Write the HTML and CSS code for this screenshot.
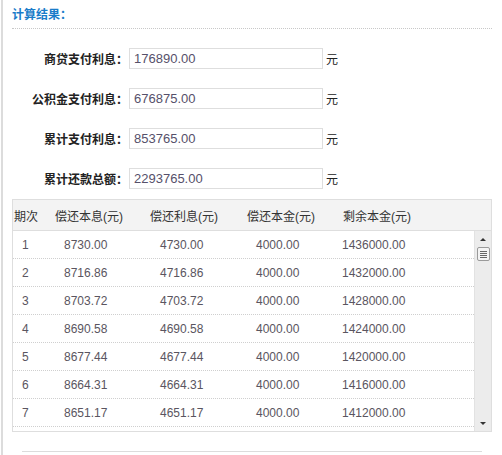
FILE: index.html
```html
<!DOCTYPE html>
<html lang="zh-CN">
<head>
<meta charset="utf-8">
<title>计算结果</title>
<link rel="stylesheet" href="styles.css">
</head>
<body>
<div class="panel">
  <div class="title">计算结果：</div>
  <div class="form">
    <div class="row"><span class="label">商贷支付利息：</span><span class="input">176890.00</span><span class="unit">元</span></div>
    <div class="row"><span class="label">公积金支付利息：</span><span class="input">676875.00</span><span class="unit">元</span></div>
    <div class="row"><span class="label">累计支付利息：</span><span class="input">853765.00</span><span class="unit">元</span></div>
    <div class="row"><span class="label">累计还款总额：</span><span class="input">2293765.00</span><span class="unit">元</span></div>
  </div>
  <div class="table">
    <div class="thead">
      <span>期次</span><span>偿还本息(元)</span><span>偿还利息(元)</span><span>偿还本金(元)</span><span>剩余本金(元)</span>
    </div>
    <div class="tbody">
      <div class="rows">
        <div class="tr"><span>1</span><span>8730.00</span><span>4730.00</span><span>4000.00</span><span>1436000.00</span></div>
        <div class="tr"><span>2</span><span>8716.86</span><span>4716.86</span><span>4000.00</span><span>1432000.00</span></div>
        <div class="tr"><span>3</span><span>8703.72</span><span>4703.72</span><span>4000.00</span><span>1428000.00</span></div>
        <div class="tr"><span>4</span><span>8690.58</span><span>4690.58</span><span>4000.00</span><span>1424000.00</span></div>
        <div class="tr"><span>5</span><span>8677.44</span><span>4677.44</span><span>4000.00</span><span>1420000.00</span></div>
        <div class="tr"><span>6</span><span>8664.31</span><span>4664.31</span><span>4000.00</span><span>1416000.00</span></div>
        <div class="tr"><span>7</span><span>8651.17</span><span>4651.17</span><span>4000.00</span><span>1412000.00</span></div>
      </div>
      <div class="scrollbar">
        <svg class="arrow" width="16" height="16" viewBox="0 0 16 16"><path d="M5 10 L11 10 L8 7 Z" fill="#333"/></svg>
        <div class="thumb"><i></i><i></i><i></i><i></i></div>
        <div class="track"></div>
        <svg class="arrow" width="16" height="16" viewBox="0 0 16 16"><path d="M5 7 L11 7 L8 10 Z" fill="#333"/></svg>
      </div>
    </div>
  </div>
  <div class="bottom-line"></div>
</div>
</body>
</html>
```
FILE: styles.css
```css
html, body {
  margin: 0;
  padding: 0;
  background: #fff;
}
body {
  font-family: "Liberation Sans", Arial, "Noto Sans CJK SC", sans-serif;
  font-size: 12px;
  color: #333;
  width: 502px;
  height: 455px;
  overflow: hidden;
}
.panel {
  margin-left: 1px;
  border-left: 2px solid #dcdcdc;
  padding: 0 10px 0 9px;
  height: 455px;
  box-sizing: border-box;
}
.title {
  height: 29px;
  line-height: 16px;
  padding-top: 7px;
  box-sizing: border-box;
  border-bottom: 1px dotted #c8c8c8;
  color: #1a7cc9;
  font-weight: bold;
  font-size: 12px;
}
.form {
  padding-top: 19px;
  display: flex;
  flex-direction: column;
  gap: 19px;
}
.row {
  display: flex;
  align-items: center;
  height: 21px;
}
.label {
  width: 116px;
  text-align: right;
  font-weight: bold;
  color: #222;
  margin-right: 1px;
  white-space: nowrap;
}
.input {
  width: 194px;
  height: 21px;
  box-sizing: border-box;
  border: 1px solid #dedede;
  padding-left: 4px;
  font-size: 13px;
  line-height: 19px;
  color: #56506a;
}
.unit {
  margin-left: 3px;
  color: #222;
}
.table {
  margin-top: 10px;
  border: 1px solid #dedede;
}
.thead {
  height: 31px;
  box-sizing: border-box;
  border-bottom: 1px solid #dedede;
  background: #f3f3f3;
  display: grid;
  grid-template-columns: 41px 95px 97px 96px 1fr;
  padding-left: 1px;
  align-items: center;
  color: #333;
}
.tbody {
  display: flex;
  height: 200px;
}
.rows {
  flex: 1;
  overflow: hidden;
}
.tr {
  height: 28px;
  box-sizing: border-box;
  border-bottom: 1px dotted #cfcfcf;
  display: grid;
  grid-template-columns: 42px 96px 96px 86px 1fr;
  padding-left: 9px;
  align-items: center;
  color: #5a5560;
}
.scrollbar {
  width: 16px;
  background: #ececec;
  border-left: 1px solid #e2e2e2;
  display: flex;
  flex-direction: column;
  align-items: center;
}
.arrow {
  display: block;
  flex: none;
}
.thumb {
  width: 13px;
  height: 14px;
  box-sizing: border-box;
  border: 1px solid #9a9a9a;
  border-radius: 2px;
  background: #f4f4f4;
  display: flex;
  flex-direction: column;
  justify-content: center;
  gap: 1px;
  padding: 0 2px;
  flex: none;
}
.thumb i {
  display: block;
  height: 1px;
  background: #666;
}
.track {
  flex: 1;
}
.bottom-line {
  margin: 19px 10px 0 10px;
  border-top: 1px solid #dcdcdc;
}
```
